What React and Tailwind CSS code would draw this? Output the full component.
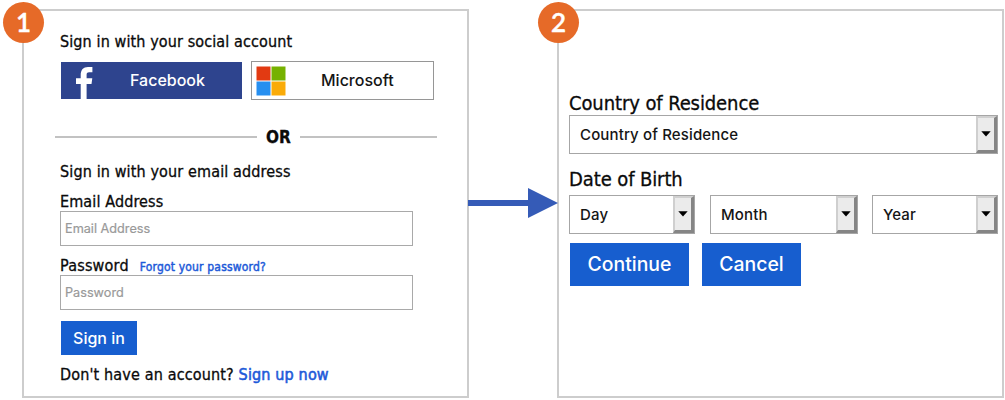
import React from "react";

const tahoma = "font-['DejaVu_Sans_Condensed','DejaVu_Sans',sans-serif] [font-stretch:condensed] [-webkit-text-stroke-width:0.3px] whitespace-nowrap text-[#0a0a0a]";
const inter = "font-['Inter',sans-serif] whitespace-nowrap";

function Badge({ children }) {
  return (
    <div className="absolute -left-[21px] -top-[9px] flex size-[41px] items-center justify-center rounded-full bg-[#e66a28] pb-px font-['Lato',sans-serif] text-[26px] leading-none font-semibold text-white [-webkit-text-stroke-width:0.4px]">
      {children}
    </div>
  );
}

function Panel({ step, className, children }) {
  return (
    <section className={`relative flex h-[389px] w-[447px] shrink-0 flex-col border-2 border-[#cdcdcd] bg-white ${className}`}>
      <Badge>{step}</Badge>
      {children}
    </section>
  );
}

function Select({ label, className }) {
  return (
    <div className={`flex h-[39px] items-stretch border border-[#a6a6a6] bg-white ${className}`}>
      <span className={`${inter} flex-1 self-center pl-[10px] pt-px text-[15px] leading-5 font-medium tracking-[0.14px] text-[#151515]`}>{label}</span>
      <span className="flex w-[21px] items-center justify-center border-2 border-r-[3px] border-b-[3px] border-t-[#d0d0d0] border-r-[#858585] border-b-[#858585] border-l-[#cfcfcf] bg-[#ebebeb]">
        <svg width="10" height="6" viewBox="0 0 10 6"><path d="M0.3 0.3H9.7L5 5.6Z" fill="#000" /></svg>
      </span>
    </div>
  );
}

export default function App() {
  return (
    <main className="flex h-[400px] w-[1005px] overflow-hidden bg-white pt-[9px] pl-[22px]">
      <Panel step="1" className="pl-9">
        <h2 className={`${tahoma} mt-[21px] h-5 text-[16px] leading-5 tracking-[0.11px]`}>Sign in with your social account</h2>
        <div className="mt-[9px] ml-px flex items-center gap-[9px]">
          <button className="flex h-[37px] w-[181px] items-end bg-[#2e448e]">
            <svg className="ml-[15px]" width="17" height="32" viewBox="0 0 17 32">
              <path d="M4.7 32V17H0V11.3H4.7V8.2C4.7 2.8 7.3 0 12 0H16.4V5.3H13.2C11 5.3 10.6 6.3 10.6 8V11.3H16.3L15.5 17H10.6V32Z" fill="#fff" />
            </svg>
            <span className={`${inter} ml-[37px] self-center pb-px text-[16px] leading-6 font-medium text-white`}>Facebook</span>
          </button>
          <button className="flex h-[39px] w-[183px] items-center border border-[#969696] bg-white">
            <svg className="ml-1" width="30" height="30" viewBox="0 0 30 30">
              <path d="M0.5 0.5h14v14h-14z" fill="#e23a12" />
              <path d="M15.5 0.5h14v14h-14z" fill="#76b100" />
              <path d="M0.5 15.5h14v14h-14z" fill="#268ff0" />
              <path d="M15.5 15.5h14v14h-14z" fill="#faab08" />
            </svg>
            <span className={`${inter} ml-[35px] pb-px text-[16px] leading-6 font-medium text-[#151515]`}>Microsoft</span>
          </button>
        </div>
        <div className="mt-[27px] -ml-[5px] flex h-5 w-[382px] items-center">
          <span className="h-[2px] w-[202px] bg-[#c2c2c2]" />
          <span className={`${tahoma} flex-1 text-center text-[17px] leading-5 font-bold`}>OR</span>
          <span className="h-[2px] w-[137px] bg-[#c2c2c2]" />
        </div>
        <h2 className={`${tahoma} mt-[15px] h-5 text-[16px] leading-5 tracking-[0.13px]`}>Sign in with your email address</h2>
        <label className={`${tahoma} mt-[10px] h-[19px] text-[16px] leading-5 tracking-[0.12px]`}>Email Address</label>
        <div className={`${inter} flex h-[35px] w-[353px] items-center border border-[#a9a9a9] pl-1 pt-px text-[12.7px] text-[#999] [-webkit-text-stroke-width:0.2px]`}>Email Address</div>
        <div className={`${tahoma} mt-[10px] flex h-[19px] items-baseline text-[16px] leading-5 tracking-[0.2px]`}>
          <label>Password</label>
          <a className="ml-[11px] text-[12px] tracking-[0.18px] text-[#1d5ad9] [-webkit-text-stroke-width:0.45px]">Forgot your password?</a>
        </div>
        <div className={`${inter} flex h-[35px] w-[353px] items-center border border-[#a9a9a9] pl-1 text-[12.7px] text-[#999] [-webkit-text-stroke-width:0.2px]`}>Password</div>
        <button className={`${inter} mt-[11px] ml-px h-[34px] w-[76px] bg-[#175ecf] text-[16px] font-medium text-white`}>Sign in</button>
        <p className={`${tahoma} mt-[10px] h-5 text-[16px] leading-5 tracking-[0.15px]`}>
          Don't have an account? <a className="text-[#1d5ad9] [-webkit-text-stroke-width:0.55px]">Sign up now</a>
        </p>
      </Panel>

      <svg className="relative z-10 mt-[179px] -mr-px -ml-px shrink-0" width="90" height="30" viewBox="0 0 90 30">
        <path d="M0 12H60V0L90 15L60 30V18H0Z" fill="#355bb7" />
      </svg>

      <Panel step="2" className="pl-[10px]">
        <label className={`${tahoma} mt-[80px] h-6 text-[20px] leading-6 tracking-[-0.1px]`}>Country of Residence</label>
        <Select label="Country of Residence" className="w-[429px]" />
        <label className={`${tahoma} mt-[13px] h-[28px] text-[20px] leading-6 tracking-[-0.1px]`}>Date of Birth</label>
        <div className="flex">
          <Select label="Day" className="w-[126px]" />
          <Select label="Month" className="ml-[15px] w-[148px]" />
          <Select label="Year" className="ml-[14px] w-[126px]" />
        </div>
        <div className="mt-[9px] ml-px flex gap-[13px]">
          <button className={`${inter} h-[43px] w-[119px] bg-[#175ecf] text-[19.4px] font-medium text-white`}>Continue</button>
          <button className={`${inter} h-[43px] w-[99px] bg-[#175ecf] text-[19.4px] font-medium text-white`}>Cancel</button>
        </div>
      </Panel>
    </main>
  );
}
